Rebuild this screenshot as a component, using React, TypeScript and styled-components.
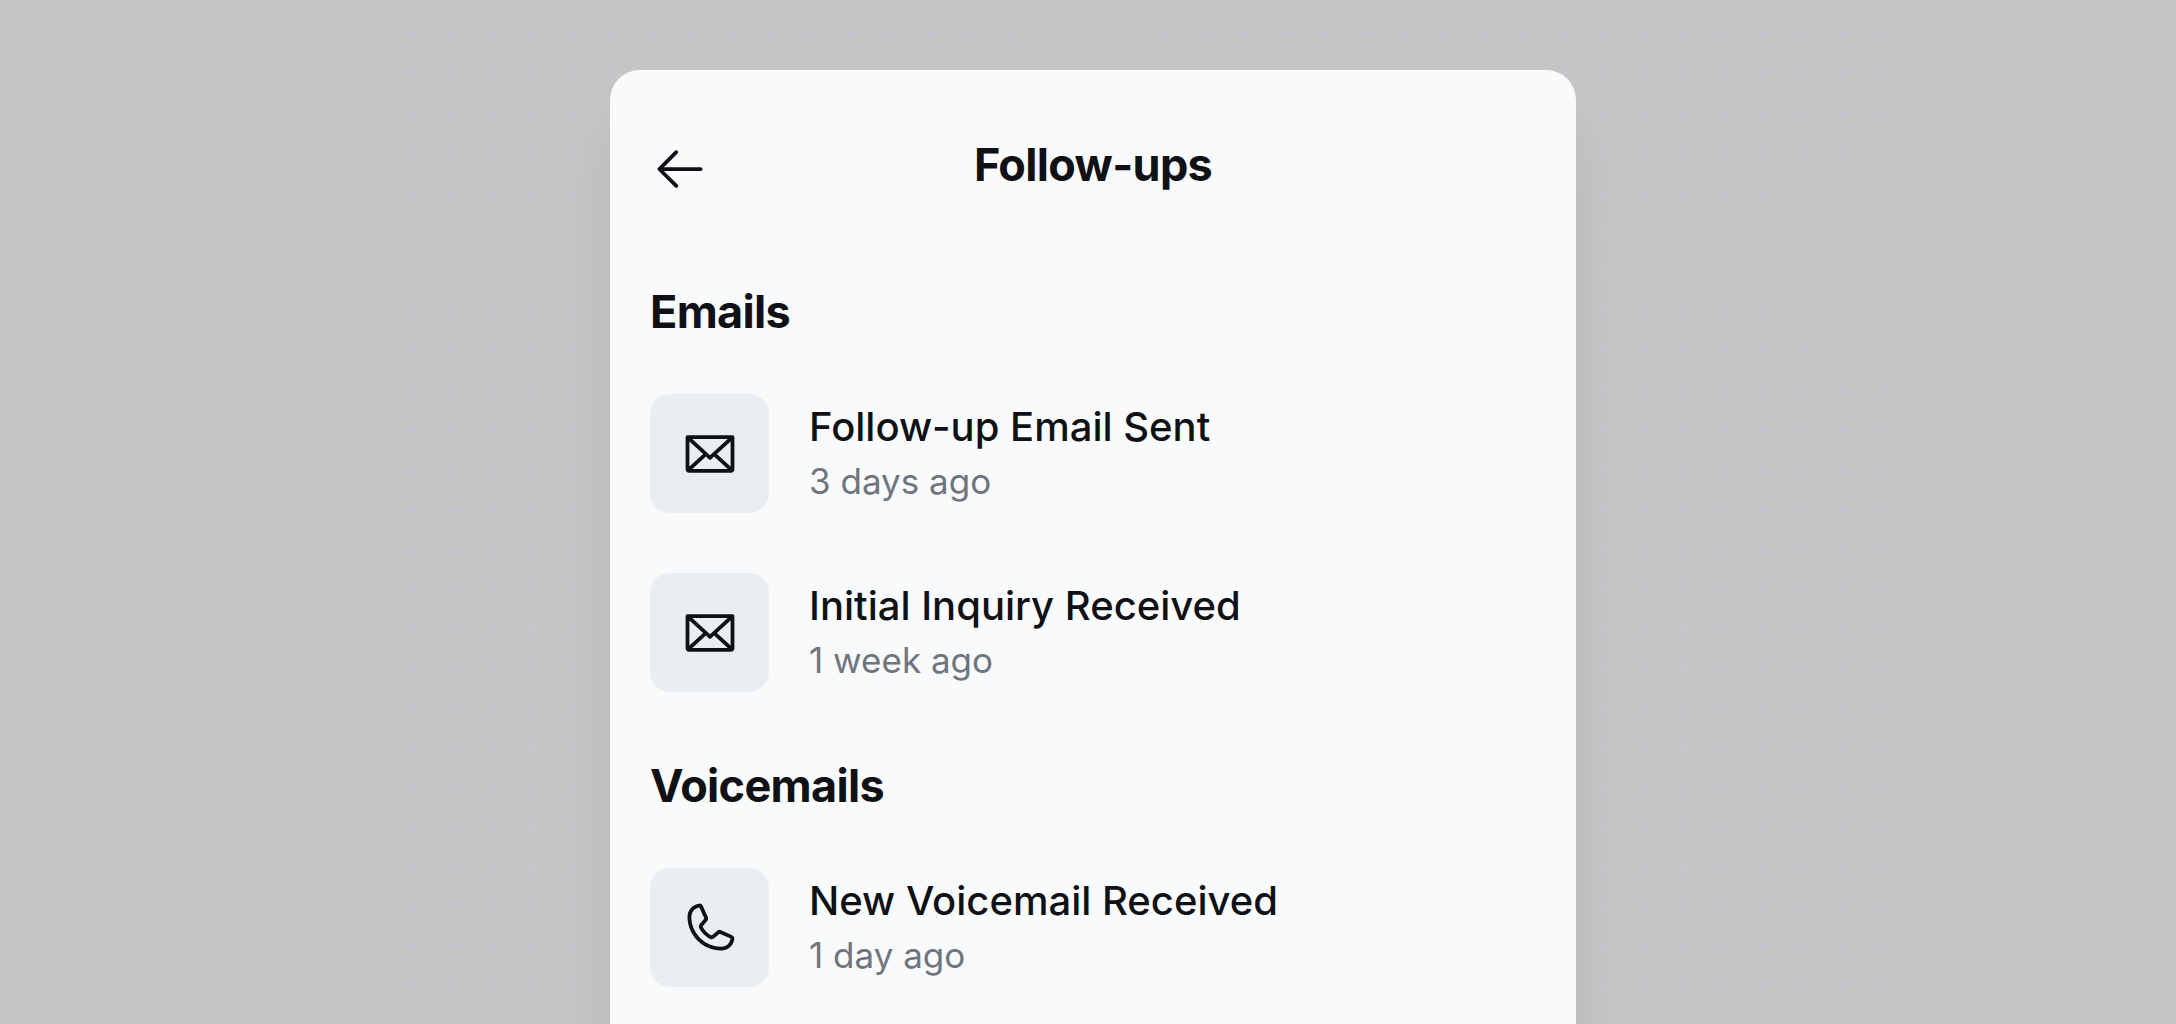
import React from "react";
import styled, { createGlobalStyle } from "styled-components";

const ink = "#0f1114";
const surface = "#f9fafc";

const GlobalStyle = createGlobalStyle`
  *, *::before, *::after { box-sizing: border-box; }
  body {
    margin: 0;
    background: #c5c5c5;
    color: ${ink};
    font-family: Inter, "Liberation Sans", sans-serif;
  }
  h1, h2, p, ul { margin: 0; padding: 0; }
`;

const Page = styled.div`
  position: relative;
  display: flex;
  justify-content: center;
  height: 100vh;
  overflow: hidden;
  padding: 70px 0 0 10px;
`;

/* Canvas dots that lie behind the card */
const DotGrid = styled.div`
  position: absolute;
  top: 14px;
  bottom: 18px;
  left: calc(50% - 694px);
  width: 1507px;
  background-image: radial-gradient(circle at center, #c3c8d5 2px, transparent 3px);
  background-size: 40px 40px;
  background-repeat: round;
`;

const Card = styled.main`
  position: relative;
  flex: none;
  width: 100%;
  max-width: 966px;
  min-height: 1200px;
  background: ${surface};
  border-radius: 30px;
  box-shadow: 0 50px 62px -12px rgba(0, 0, 0, 0.1);
`;

const Header = styled.header`
  display: grid;
  grid-template-columns: 120px 1fr 120px;
  align-items: center;
  padding: 40px 40px 20px;
`;

const BackButton = styled.button`
  display: flex;
  align-items: center;
  height: 118px;
  padding: 0;
  border: 0;
  background: none;
  color: inherit;
  cursor: pointer;
`;

const Title = styled.h1`
  padding-bottom: 8px;
  font-size: 45px;
  line-height: 56px;
  font-weight: 700;
  letter-spacing: -0.015em;
  text-align: center;
`;

const SectionTitle = styled.h2`
  padding: 36px 40px 24px;
  font-size: 45px;
  line-height: 56px;
  font-weight: 700;
  letter-spacing: -0.015em;
`;

const List = styled.ul`
  list-style: none;
`;

const Row = styled.li`
  display: flex;
  align-items: center;
  gap: 40px;
  padding: 30px 40px;
`;

const IconTile = styled.div`
  display: flex;
  flex: none;
  align-items: center;
  justify-content: center;
  width: 119px;
  height: 119px;
  border-radius: 20px;
  background: #eaeef1;
`;

const RowText = styled.div`
  display: flex;
  flex-direction: column;
`;

const RowTitle = styled.p`
  font-size: 40px;
  line-height: 54px;
  font-weight: 500;
`;

const RowTime = styled.p`
  color: #6e757d;
  font-size: 35px;
  line-height: 54px;
`;

const Glyph = styled.svg`
  display: block;
  width: 60px;
  height: 60px;
  fill: currentColor;
`;

const paths = {
  arrow:
    "M224,128a8,8,0,0,1-8,8H59.31l58.35,58.34a8,8,0,0,1-11.32,11.32l-72-72a8,8,0,0,1,0-11.32l72-72a8,8,0,0,1,11.32,11.32L59.31,120H216A8,8,0,0,1,224,128Z",
  envelope:
    "M224,48H32a8,8,0,0,0-8,8V192a16,16,0,0,0,16,16H216a16,16,0,0,0,16-16V56A8,8,0,0,0,224,48Zm-96,85.15L52.57,64H203.43ZM98.71,128,40,181.81V74.19Zm11.84,10.85,12,11.05a8,8,0,0,0,10.82,0l12-11.05,58,53.15H52.57ZM157.29,128,216,74.18V181.82Z",
  phone:
    "M222.37,158.46l-47.11-21.11-.13-.06a16,16,0,0,0-15.17,1.4,8.12,8.12,0,0,0-.75.56L134.87,160c-15.42-7.49-31.34-23.29-38.83-38.51l20.78-24.71c.2-.25.39-.5.57-.77a16,16,0,0,0,1.32-15.06l0-.12L97.54,33.64a16,16,0,0,0-16.62-9.52A56.26,56.26,0,0,0,32,80c0,79.4,64.6,144,144,144a56.26,56.26,0,0,0,55.88-48.92A16,16,0,0,0,222.37,158.46ZM176,208A128.14,128.14,0,0,1,48,80,40.2,40.2,0,0,1,82.87,40a.61.61,0,0,0,0,.12l21,47L83.2,111.86a6.13,6.13,0,0,0-.57.77,16,16,0,0,0-1,15.7c9.06,18.53,27.73,37.06,46.46,46.11a16,16,0,0,0,15.75-1.14,8.44,8.44,0,0,0,.74-.56L168.89,152l47,21.05h0s.08,0,.11,0A40.21,40.21,0,0,1,176,208Z",
};

type IconName = keyof typeof paths;

function Icon({ name }: { name: IconName }) {
  return (
    <Glyph viewBox="0 0 256 256" aria-hidden="true">
      <path d={paths[name]} />
    </Glyph>
  );
}

type Entry = { icon: IconName; title: string; time: string };

const sections: { heading: string; entries: Entry[] }[] = [
  {
    heading: "Emails",
    entries: [
      { icon: "envelope", title: "Follow-up Email Sent", time: "3 days ago" },
      { icon: "envelope", title: "Initial Inquiry Received", time: "1 week ago" },
    ],
  },
  {
    heading: "Voicemails",
    entries: [{ icon: "phone", title: "New Voicemail Received", time: "1 day ago" }],
  },
];

export default function App() {
  return (
    <>
      <GlobalStyle />
      <Page>
        <DotGrid />
        <Card>
          <Header>
            <BackButton type="button" aria-label="Back">
              <Icon name="arrow" />
            </BackButton>
            <Title>Follow-ups</Title>
          </Header>
          {sections.map((section) => (
            <section key={section.heading}>
              <SectionTitle>{section.heading}</SectionTitle>
              <List>
                {section.entries.map((entry) => (
                  <Row key={entry.title}>
                    <IconTile>
                      <Icon name={entry.icon} />
                    </IconTile>
                    <RowText>
                      <RowTitle>{entry.title}</RowTitle>
                      <RowTime>{entry.time}</RowTime>
                    </RowText>
                  </Row>
                ))}
              </List>
            </section>
          ))}
        </Card>
      </Page>
    </>
  );
}
